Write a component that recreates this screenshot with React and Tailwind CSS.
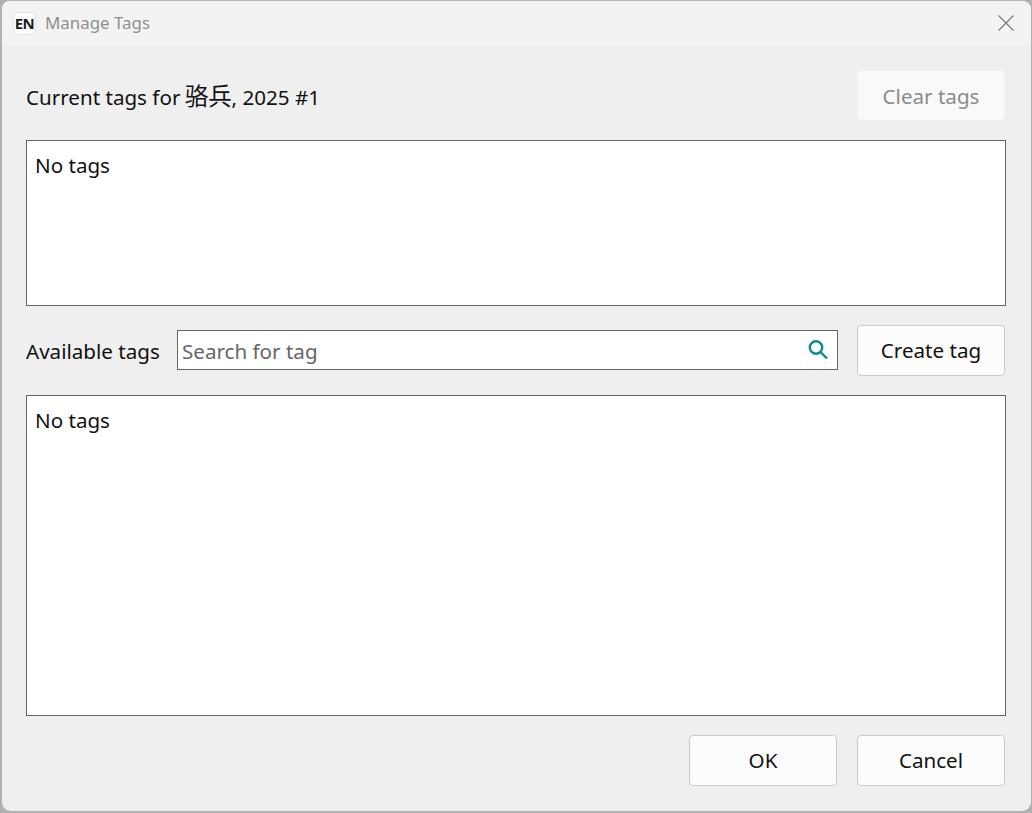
const FONT = 'font-["Noto_Sans","Noto_Sans_CJK_SC",sans-serif]';

const DialogButton = ({ children, disabled }) => (
    <button
        className={
            disabled
                ? 'w-[148px] h-[51px] rounded-[4px] bg-[#f9f9f9] border border-[#f1f1f1] text-[#8b8b8b] text-[20.6px] pt-[1px]'
                : 'w-[148px] h-[51px] rounded-[4px] bg-[#fcfcfc] border border-[#c9c9c9] text-[#111111] text-[20.6px]'
        }
    >
        {children}
    </button>
);

const TagBox = ({ height }) => (
    <div className={`${height} w-[980px] bg-white border border-[#666666] px-2 py-[7px] text-[20.6px] leading-[35px] text-[#111111]`}>
        No tags
    </div>
);

const App = () => {
    return (
        <div className={`${FONT} w-[1032px] h-[813px] bg-[#b0b0b0] overflow-hidden`}>
            <div className="w-[1030px] h-[811px] ml-[1px] border-l border-t border-[#b5b5b5] rounded-[9px] bg-[#efefef] overflow-hidden flex flex-col">
                <div className="h-[44px] bg-[#f3f3f3] flex items-center pl-[11px] pr-[16px] shrink-0">
                    <div className="w-[23px] h-[23px] rounded-[4px] bg-white border border-[#e4e4e4] flex items-center justify-center text-[15px] font-bold text-[#1a1a1a] tracking-[-0.5px]">
                        EN
                    </div>
                    <span className="ml-[9px] text-[16.9px] text-[#8f8f8f]">Manage Tags</span>
                    <svg className="ml-auto" width="18" height="18" viewBox="0 0 18 18" fill="none" stroke="#777777" strokeWidth="1.1">
                        <path d="M1.5 1.5 L16.5 16.5 M16.5 1.5 L1.5 16.5" />
                    </svg>
                </div>

                <div className="flex flex-col pl-[24px] pt-[25px]">
                    <div className="flex items-center justify-between w-[979px] h-[51px]">
                        <span className="text-[20.6px] text-[#111111] pt-[2px]">
                            Current tags for <span className="text-[23.4px] ml-[-1px]">骆兵</span>, 2025 #1
                        </span>
                        <DialogButton disabled>Clear tags</DialogButton>
                    </div>

                    <div className="mt-[19px]">
                        <TagBox height="h-[166px]" />
                    </div>

                    <div className="mt-[19px] flex items-start w-[979px] h-[51px]">
                        <span className="w-[151px] text-[20.6px] leading-[53px] text-[#111111]">Available tags</span>
                        <div className="w-[661px] h-[40px] mt-[5px] bg-white border border-[#666666] flex items-center pl-[4px] pr-[8px]">
                            <span className="text-[20.6px] text-[#666666] pt-[2px]">Search for tag</span>
                            <svg className="ml-auto" width="22" height="22" viewBox="0 0 22 22" fill="none" stroke="#0f8a84" strokeWidth="2.4">
                                <circle cx="9" cy="8.5" r="6.2" />
                                <path d="M13.5 13 L20 19.5" />
                            </svg>
                        </div>
                        <div className="ml-auto">
                            <DialogButton>Create tag</DialogButton>
                        </div>
                    </div>

                    <div className="mt-[19px]">
                        <TagBox height="h-[321px]" />
                    </div>

                    <div className="mt-[19px] flex justify-end gap-[20px] w-[979px]">
                        <DialogButton>OK</DialogButton>
                        <DialogButton>Cancel</DialogButton>
                    </div>
                </div>
            </div>
        </div>
    );
};

export default App;
